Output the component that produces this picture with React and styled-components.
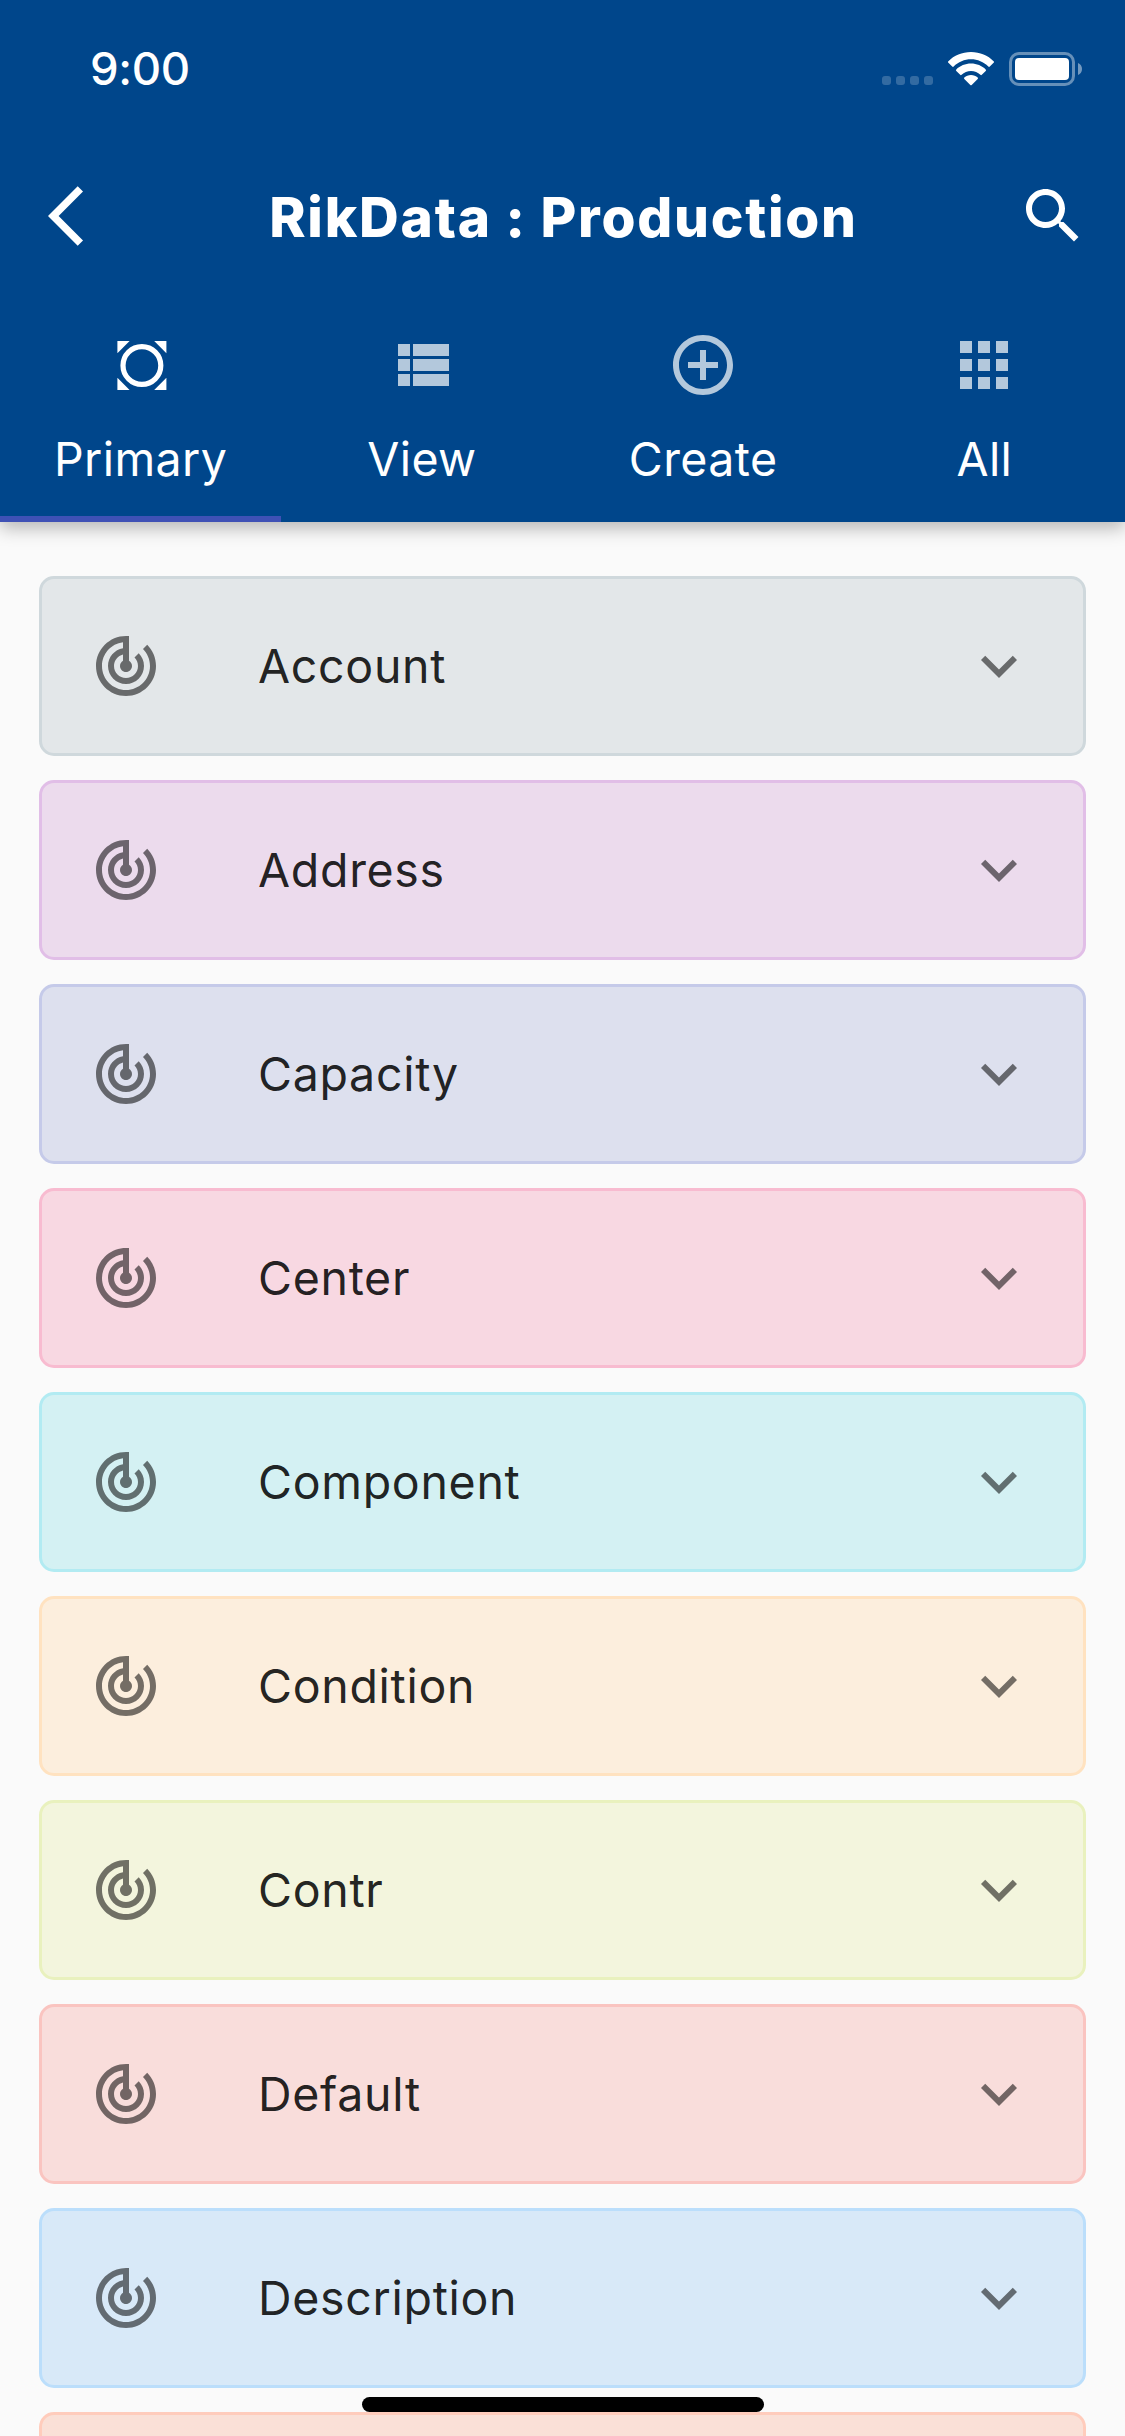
import React from 'react';
import styled, { createGlobalStyle } from 'styled-components';

const Global = createGlobalStyle`
  * { box-sizing: border-box; }
  html, body { margin: 0; padding: 0; }
  body { background: #fafafa; overflow: hidden; font-family: Inter, Roboto, sans-serif; }
`;

const Screen = styled.div`
  width: 1125px;
  height: 2436px;
  overflow: hidden;
  background: #fafafa;
  display: flex;
  flex-direction: column;
  position: relative;
`;

const Header = styled.header`
  flex: none;
  height: 522px;
  background: #00468b;
  color: #fff;
  display: flex;
  flex-direction: column;
  box-shadow: 0 6px 17px rgba(0, 0, 0, 0.28);
`;

const StatusBar = styled.div`
  height: 132px;
  padding: 6px 43px 0 90px;
  display: flex;
  align-items: center;
`;

const Clock = styled.time`
  font-size: 45.5px;
  font-weight: 550;
  line-height: 56px;
  letter-spacing: -0.4px;
  margin-right: auto;
`;

const Signal = styled.div`
  display: flex;
  gap: 5px;
  margin: 23px 15px 0 0;
`;

const SignalDot = styled.i`
  width: 9px;
  height: 9px;
  border-radius: 3px;
  background: rgba(255, 255, 255, 0.2);
`;

const Drawing = styled.svg`
  display: block;
  flex: none;
`;

const AppBar = styled.div`
  height: 168px;
  padding: 0 36px 0 48px;
  display: grid;
  grid-template-columns: 72px 1fr 72px;
  align-items: center;
`;

const Title = styled.h1`
  margin: 0;
  padding: 1px 10px 0 0;
  text-align: center;
  font-size: 55px;
  font-weight: 850;
  line-height: 66px;
  letter-spacing: 1.75px;
  white-space: nowrap;
`;

const Tabs = styled.nav`
  flex: 1;
  display: grid;
  grid-template-columns: repeat(4, 1fr);
`;

const Tab = styled.a`
  display: flex;
  flex-direction: column;
  align-items: center;
  padding-top: 29px;
  border-bottom: 6px solid ${(p) => (p.$active ? '#3f51b5' : 'transparent')};
  font-size: 46.5px;
  line-height: 56px;
  letter-spacing: 0.4px;
  svg { opacity: ${(p) => (p.$active ? 1 : 0.7)}; }
`;

const TabLabel = styled.span`
  margin-top: 30px;
`;

const List = styled.main`
  flex: none;
  padding: 54px 39px 0;
  display: flex;
  flex-direction: column;
  gap: 24px;
`;

const Card = styled.article`
  height: 180px;
  flex: none;
  display: flex;
  align-items: center;
  padding: 0 48px;
  border: 3px solid ${(p) => p.$edge};
  border-radius: 15px;
  background: ${(p) => p.$fill};
  color: rgba(0, 0, 0, 0.54);
`;

const CardLabel = styled.span`
  flex: 1;
  padding-left: 96px;
  font-size: 46.5px;
  line-height: 56px;
  letter-spacing: 0.7px;
  color: rgba(0, 0, 0, 0.87);
`;

const HomeIndicator = styled.div`
  position: absolute;
  left: 362px;
  bottom: 24px;
  width: 402px;
  height: 15px;
  border-radius: 8px;
  background: #000;
`;

const Icon = ({ d }) => (
  <Drawing width="72" height="72" viewBox="0 0 24 24" fill="currentColor">
    <path d={d} />
  </Drawing>
);

const icons = {
  back: 'M11.67 3.87L9.9 2.1 0 12l9.9 9.9 1.77-1.77L3.54 12z',
  search: 'M15.5 14h-.79l-.28-.27C15.41 12.59 16 11.11 16 9.5 16 5.91 13.09 3 9.5 3S3 5.91 3 9.5 5.91 16 9.5 16c1.61 0 3.09-.59 4.23-1.57l.27.28v.79l5 4.99L20.49 19l-4.99-5zm-6 0C7.01 14 5 11.99 5 9.5S7.01 5 9.5 5 14 7.01 14 9.5 11.99 14 9.5 14z',
  list: 'M4 14h4v-4H4v4zm0 5h4v-4H4v4zM4 9h4V5H4v4zm5 5h12v-4H9v4zm0 5h12v-4H9v4zM9 5v4h12V5H9z',
  create: 'M13 7h-2v4H7v2h4v4h2v-4h4v-2h-4V7zm-1-5C6.48 2 2 6.48 2 12s4.48 10 10 10 10-4.48 10-10S17.52 2 12 2zm0 18c-4.41 0-8-3.59-8-8s3.59-8 8-8 8 3.59 8 8-3.59 8-8 8z',
  apps: 'M4 8h4V4H4v4zm6 12h4v-4h-4v4zm-6 0h4v-4H4v4zm0-6h4v-4H4v4zm6 0h4v-4h-4v4zm6-10v4h4V4h-4zm-6 4h4V4h-4v4zm6 6h4v-4h-4v4zm0 6h4v-4h-4v4z',
  track: 'M19.07 4.93l-1.41 1.41C19.1 7.79 20 9.79 20 12c0 4.42-3.58 8-8 8s-8-3.58-8-8c0-4.08 3.05-7.44 7-7.93v2.02C8.16 6.57 6 9.03 6 12c0 3.31 2.69 6 6 6s6-2.69 6-6c0-1.66-.67-3.16-1.76-4.24l-1.41 1.41C15.55 9.9 16 10.9 16 12c0 2.21-1.79 4-4 4s-4-1.79-4-4c0-1.86 1.28-3.41 3-3.86v2.14c-.6.35-1 .98-1 1.72 0 1.1.9 2 2 2s2-.9 2-2c0-.74-.4-1.38-1-1.72V2h-1C6.48 2 2 6.48 2 12s4.48 10 10 10 10-4.48 10-10c0-2.76-1.12-5.26-2.93-7.07z',
  expand: 'M16.59 8.59L12 13.17 7.41 8.59 6 10l6 6 6-6z',
};

const FrameIcon = () => (
  <Drawing width="72" height="72" viewBox="0 0 72 72">
    <circle cx="36.9" cy="36.5" r="18.9" fill="none" stroke="currentColor" strokeWidth="5.2" />
    <path fill="currentColor" d="M12.400 12h12.200L12.400 24.200zM61.400 12v12.200L49.200 12zM12.400 61V48.800l12.200 12.200zM61.400 61H49.200l12.200-12.200z" />
  </Drawing>
);

const Wifi = styled(Drawing)`
  margin-right: 15px;
`;

const tabs = [
  { label: 'Primary', icon: <FrameIcon />, active: true },
  { label: 'View', icon: <Icon d={icons.list} /> },
  { label: 'Create', icon: <Icon d={icons.create} /> },
  { label: 'All', icon: <Icon d={icons.apps} /> },
];

const cards = [
  ['Account', '#e3e7e9', '#cfd8dc'],
  ['Address', '#ecdbed', '#e1bee7'],
  ['Capacity', '#dde0ee', '#c5cae9'],
  ['Center', '#f8d8e2', '#f8bbd0'],
  ['Component', '#d4f1f3', '#b2ebf2'],
  ['Condition', '#fceedd', '#ffe2c0'],
  ['Contr', '#f3f5dd', '#e9f1be'],
  ['Default', '#f9dddb', '#fac4c0'],
  ['Description', '#d8e9f8', '#bbdefb'],
  ['', '#fae0d7', '#ffccbc'],
];

export default function App() {
  return (
    <Screen>
      <Global />
      <Header>
        <StatusBar>
          <Clock>9:00</Clock>
          <Signal>
            <SignalDot /><SignalDot /><SignalDot /><SignalDot />
          </Signal>
          <Wifi width="46" height="34" viewBox="0 0 46 34" fill="#fff">
            <path d="M23 0C14 0 6 3.500 .4 9.200a1 1 0 0 0 0 1.500l3.800 3.800a1 1 0 0 0 1.500 0C10.300 10 16.400 7.300 23 7.300s12.700 2.700 17.300 7.200a1 1 0 0 0 1.500 0l3.800-3.800a1 1 0 0 0 0-1.500C40 3.500 32 0 23 0z" />
            <path d="M23 11.500c-5.700 0-10.900 2.300-14.700 5.900a1 1 0 0 0 0 1.500l3.900 3.900a1 1 0 0 0 1.400 0c2.500-2.300 5.800-3.700 9.400-3.700s6.900 1.400 9.400 3.700a1 1 0 0 0 1.400 0l3.900-3.900a1 1 0 0 0 0-1.500c-3.800-3.600-9-5.900-14.700-5.900z" />
            <path d="M23 23c-2.600 0-5 1-6.700 2.600a1 1 0 0 0 0 1.400l6 5.900a1 1 0 0 0 1.400 0l6-5.900a1 1 0 0 0 0-1.400C28 24 25.600 23 23 23z" />
          </Wifi>
          <Drawing width="73" height="34" viewBox="0 0 73 34">
            <rect x="1.500" y="1.500" width="63" height="31" rx="8.500" fill="none" stroke="#fff" strokeOpacity=".4" strokeWidth="3" />
            <rect x="6" y="6" width="54" height="22" rx="4" fill="#fff" />
            <path d="M69 11c2.500 1 4 3.300 4 6s-1.500 5-4 6z" fill="#fff" fillOpacity=".45" />
          </Drawing>
        </StatusBar>
        <AppBar>
          <Icon d={icons.back} />
          <Title>RikData : Production</Title>
          <Icon d={icons.search} />
        </AppBar>
        <Tabs>
          {tabs.map((t) => (
            <Tab key={t.label} $active={t.active}>
              {t.icon}
              <TabLabel>{t.label}</TabLabel>
            </Tab>
          ))}
        </Tabs>
      </Header>
      <List>
        {cards.map(([label, fill, edge]) => (
          <Card key={edge} $fill={fill} $edge={edge}>
            <Icon d={icons.track} />
            <CardLabel>{label}</CardLabel>
            <Icon d={icons.expand} />
          </Card>
        ))}
      </List>
      <HomeIndicator />
    </Screen>
  );
}
